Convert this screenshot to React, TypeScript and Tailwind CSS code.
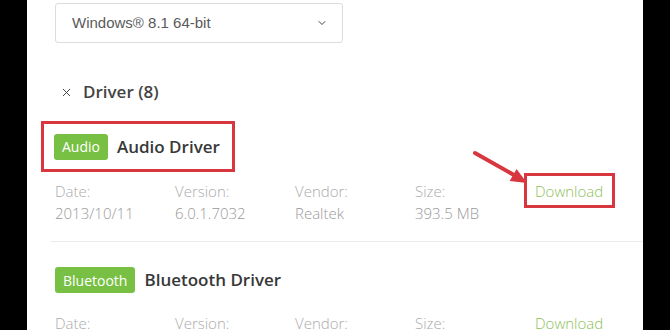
import { ChevronDown, X } from 'lucide-react'

const cols = ['Date:', 'Version:', 'Vendor:', 'Size:']

type Driver = {
  tag: string
  name: string
  values: string[]
}

const drivers: Driver[] = [
  { tag: 'Audio', name: 'Audio Driver', values: ['2013/10/11', '6.0.1.7032', 'Realtek', '393.5 MB'] },
  { tag: 'Bluetooth', name: 'Bluetooth Driver', values: ['2013/10/11', '6.0.1.7032', 'Intel', '12.2 MB'] },
]

function Header({ driver }: { driver: Driver }) {
  return (
    <div className="flex h-[26px] items-center gap-[9px]">
      <span className="flex h-[26px] items-center rounded-[3px] bg-[#77c043] px-[8px] text-[14px] text-white">
        {driver.tag}
      </span>
      <span className="text-[17px] font-semibold text-[#383838]">{driver.name}</span>
    </div>
  )
}

function Details({ driver, boxed }: { driver: Driver; boxed?: boolean }) {
  return (
    <div className={`flex text-[15px] font-light leading-[22px] ${boxed ? 'mt-[8px]' : 'mt-[19px]'}`}>
      {cols.map((c, i) => (
        <div key={c} className="w-[120px]">
          <div className="text-[#ababab]">{c}</div>
          <div className="text-[#9a9a9a]">{driver.values[i]}</div>
        </div>
      ))}
      <div className="relative h-[22px] text-[#8cc15a]">
        Download
        {boxed && (
          <span className="absolute -top-[7px] -bottom-[6px] -left-[11px] -right-[12px] border-[3px] border-[#d9373f]" />
        )}
      </div>
    </div>
  )
}

export default function App() {
  return (
    <div
      className="flex h-[330px] w-[670px] overflow-hidden bg-black"
      style={{ fontFamily: '"Open Sans", sans-serif' }}
    >
      <div className="w-[27px] shrink-0" />
      <main className="relative w-[616px] shrink-0 bg-white pl-[28px] pt-[3px]">
        <div
          className="flex h-[40px] w-[288px] items-center justify-between rounded-[3px] border border-[#dcdcdc] pl-[16px] pr-[14px] text-[15px] text-[#5a5a5a]"
          style={{ fontFamily: '"Liberation Sans", Arial, sans-serif' }}
        >
          <span>Windows® 8.1 64-bit</span>
          <ChevronDown className="h-[12px] w-[12px] text-[#444]" strokeWidth={2} />
        </div>

        <div className="mt-[37px] flex h-[24px] items-center gap-[10px] pl-[5px] text-[#444]">
          <X className="h-[13px] w-[13px]" strokeWidth={1.8} />
          <span className="text-[17px] font-semibold">Driver (8)</span>
        </div>

        <div className="-ml-[14px] mt-[17px] inline-flex h-[51px] items-center border-[3px] border-[#d9373f] pl-[10px] pr-[12px]">
          <Header driver={drivers[0]} />
        </div>
        <Details driver={drivers[0]} boxed />

        <div className="-ml-[4px] mt-[17px] h-px bg-[#ececec]" />

        <div className="mt-[25px]">
          <Header driver={drivers[1]} />
        </div>
        <Details driver={drivers[1]} />

        <svg
          className="absolute left-[443px] top-[148px]"
          width="62"
          height="40"
          viewBox="0 0 62 40"
        >
          <line x1="5" y1="5" x2="44" y2="27" stroke="#d9373f" strokeWidth="4" strokeLinecap="round" />
          <polygon points="57,35 39.6,33.1 46.6,20.9" fill="#d9373f" />
        </svg>
      </main>
      <div className="flex-1" />
    </div>
  )
}
